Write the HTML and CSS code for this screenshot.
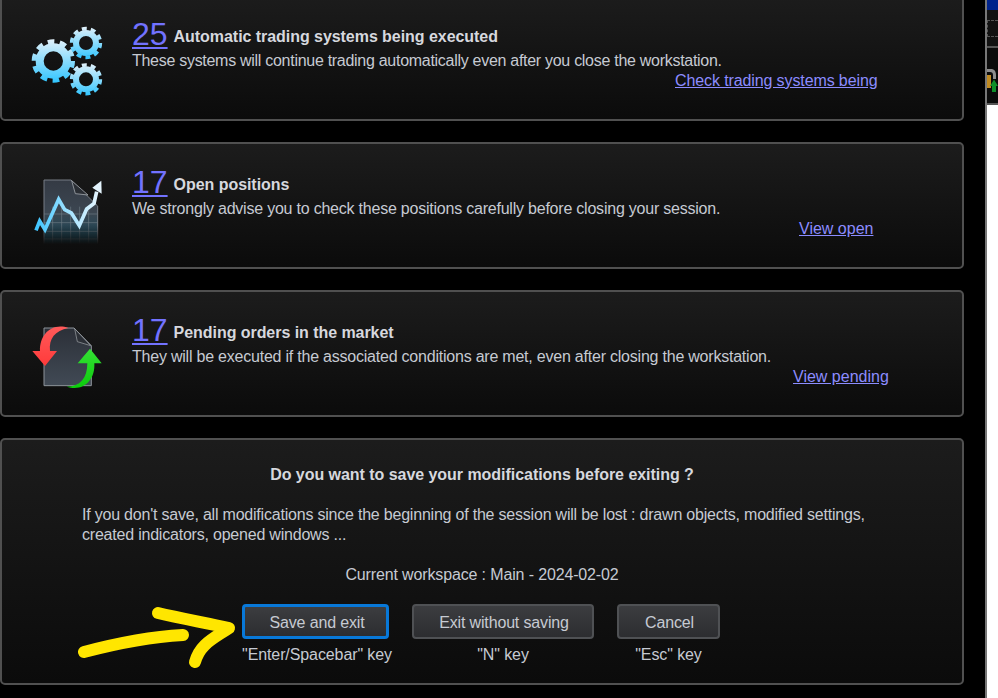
FILE: index.html
```html
<!DOCTYPE html>
<html lang="en">
<head>
<meta charset="utf-8">
<title>Exit workstation</title>
<link rel="stylesheet" href="styles.css">
</head>
<body>
<div class="screen">
  <main class="dialog">
    <section class="panel info">
      <svg class="icon" viewBox="60 72 300 240" aria-hidden="true">
        <defs>
          <linearGradient id="gearBig" gradientUnits="userSpaceOnUse" x1="0" y1="118" x2="0" y2="248">
            <stop offset="0" stop-color="#e2f1fa"/>
            <stop offset="1" stop-color="#30c5ff"/>
          </linearGradient>
          <linearGradient id="gearTop" gradientUnits="userSpaceOnUse" x1="0" y1="80" x2="0" y2="178">
            <stop offset="0" stop-color="#e2f1fa"/>
            <stop offset="1" stop-color="#30c5ff"/>
          </linearGradient>
          <linearGradient id="gearLow" gradientUnits="userSpaceOnUse" x1="0" y1="190" x2="0" y2="287">
            <stop offset="0" stop-color="#e2f1fa"/>
            <stop offset="1" stop-color="#30c5ff"/>
          </linearGradient>
        </defs>
        <g fill="none">
          <g stroke="url(#gearBig)">
            <circle cx="160" cy="183" r="41" stroke-width="24"/>
            <circle cx="160" cy="183" r="58" stroke-width="14" pathLength="100" stroke-dasharray="5.5 4.5"/>
          </g>
          <g stroke="url(#gearTop)">
            <circle cx="258" cy="129" r="30" stroke-width="18"/>
            <circle cx="258" cy="129" r="43" stroke-width="11" pathLength="100" stroke-dasharray="5.5 4.5"/>
          </g>
          <g stroke="url(#gearLow)">
            <circle cx="258" cy="238" r="30" stroke-width="18"/>
            <circle cx="258" cy="238" r="43" stroke-width="11" pathLength="100" stroke-dasharray="5.5 4.5"/>
          </g>
        </g>
      </svg>
      <div class="info-body">
        <div class="headline"><a class="count" href="#">25</a><strong class="title">Automatic trading systems being executed</strong></div>
        <p class="line line-tight">These systems will continue trading automatically even after you close the workstation.</p>
        <a class="action action-systems" href="#">Check trading systems being</a>
      </div>
    </section>

    <section class="panel info">
      <svg class="icon" viewBox="60 111 300 240" aria-hidden="true">
        <defs>
          <linearGradient id="fade" x1="0" y1="0" x2="0" y2="1">
            <stop offset="0" stop-color="#fff"/>
            <stop offset=".72" stop-color="#fff"/>
            <stop offset="1" stop-color="#000"/>
          </linearGradient>
          <mask id="fadeMask" maskUnits="userSpaceOnUse" x="60" y="120" width="300" height="220">
            <rect x="60" y="120" width="300" height="208" fill="url(#fade)"/>
          </mask>
          <linearGradient id="docChart" x1="0" y1="0" x2="0" y2="1">
            <stop offset="0" stop-color="#343a44"/>
            <stop offset=".5" stop-color="#3c4651"/>
            <stop offset="1" stop-color="#14485a"/>
          </linearGradient>
          <linearGradient id="chartLine" gradientUnits="userSpaceOnUse" x1="105" y1="0" x2="300" y2="0">
            <stop offset="0" stop-color="#3cc4ff"/>
            <stop offset=".55" stop-color="#a8e4ff"/>
            <stop offset="1" stop-color="#e8f6ff"/>
          </linearGradient>
        </defs>
        <g mask="url(#fadeMask)">
          <path d="M132 135H213L293 213V328H132Z" fill="url(#docChart)" stroke="#777d85" stroke-width="3"/>
          <path d="M158 215V328M185 215V328M212 215V328M239 215V328M266 215V328M132 237H293M132 263H293M132 289H293M132 312H293" stroke="#6c7a83" stroke-width="2" fill="none"/>
        </g>
        <path d="M215 137L226 176L264 180Z" fill="#2a2e34" stroke="#a0a5ab" stroke-width="2.5"/>
        <path d="M108 286L119 258L135 284L176 193L194 224L214 234L238 272L260 222L282 205L290 170" fill="none" stroke="url(#chartLine)" stroke-width="11"/>
        <path d="M304 137L305 176L277 158Z" fill="#e4f4fd"/>
      </svg>
      <div class="info-body">
        <div class="headline"><a class="count" href="#">17</a><strong class="title">Open positions</strong></div>
        <p class="line">We strongly advise you to check these positions carefully before closing your session.</p>
        <a class="action action-open" href="#">View open</a>
      </div>
    </section>

    <section class="panel info">
      <svg class="icon" viewBox="60 105 300 240" aria-hidden="true">
        <defs>
          <linearGradient id="docOrders" x1="0" y1="0" x2="0" y2="1">
            <stop offset="0" stop-color="#2c3038"/>
            <stop offset="1" stop-color="#414a55"/>
          </linearGradient>
          <linearGradient id="red" x1="0" y1="0" x2="0" y2="1">
            <stop offset="0" stop-color="#ff5a5a"/>
            <stop offset="1" stop-color="#ff3a3a"/>
          </linearGradient>
          <linearGradient id="green" x1="0" y1="0" x2="0" y2="1">
            <stop offset="0" stop-color="#35e035"/>
            <stop offset="1" stop-color="#0ccc0c"/>
          </linearGradient>
        </defs>
        <path d="M132 129H222L274 182V302H132Z" fill="url(#docOrders)" stroke="#8d939a" stroke-width="3"/>
        <path d="M224 131L232 170L272 182Z" fill="#2b2f36" stroke="#a4a9ae" stroke-width="2"/>
        <path d="M205 129C155 112 118 150 120 198H97L135 243L171 198H150C146 160 165 138 205 129Z" fill="url(#red)"/>
        <path d="M233 235L270 191L305 235H283C286 285 250 322 200 305C240 305 262 280 262 235Z" fill="url(#green)"/>
      </svg>
      <div class="info-body">
        <div class="headline"><a class="count" href="#">17</a><strong class="title">Pending orders in the market</strong></div>
        <p class="line">They will be executed if the associated conditions are met, even after closing the workstation.</p>
        <a class="action action-pending" href="#">View pending</a>
      </div>
    </section>

    <section class="panel confirm">
      <h1 class="question">Do you want to save your modifications before exiting ?</h1>
      <p class="warning">If you don't save, all modifications since the beginning of the session will be lost : drawn objects, modified settings, created indicators, opened windows ...</p>
      <p class="workspace">Current workspace : Main - 2024-02-02</p>
      <div class="choices">
        <div class="choice choice-save">
          <button class="btn btn-primary" type="button">Save and exit</button>
          <span class="hint">"Enter/Spacebar" key</span>
        </div>
        <div class="choice choice-discard">
          <button class="btn" type="button">Exit without saving</button>
          <span class="hint">"N" key</span>
        </div>
        <div class="choice choice-cancel">
          <button class="btn" type="button">Cancel</button>
          <span class="hint">"Esc" key</span>
        </div>
      </div>
    </section>
  </main>

  <aside class="backdrop" aria-hidden="true">
    <div class="bd-blue"></div>
    <div class="bd-toolbar"><span class="bd-dashed"></span></div>
    <div class="bd-status">
      <svg class="bd-lock" viewBox="0 0 11 26">
        <path d="M0 1H4C7 1 9 3 9 7V11H6V7C6 5 5 4 3 4H0Z" fill="#8d8d8d"/>
        <rect x="0" y="7" width="4" height="13" fill="#c08a20"/>
        <path d="M7 11.500L11 18H9V24H5V18H3Z" fill="#0f8f2a"/>
      </svg>
    </div>
    <div class="bd-white"></div>
  </aside>

  <svg class="scribble" viewBox="0 0 180 80" aria-hidden="true">
    <path d="M6 53C40 44 70 38 105 36" />
    <path d="M80 14C105 20 130 24 151 29C135 40 122 45 117 63" />
  </svg>
</div>
</body>
</html>
```

FILE: styles.css
```css
* { box-sizing: border-box; }

html, body {
  margin: 0;
  height: 100%;
  background: #000;
  overflow: hidden;
}

body {
  font-family: "Liberation Sans", Arial, sans-serif;
  font-size: 16px;
  line-height: 20px;
  color: #c6cad2;
}

.screen {
  position: relative;
  display: flex;
  width: 998px;
  height: 698px;
  overflow: hidden;
}

.dialog {
  display: flex;
  flex-direction: column;
  gap: 21px;
  width: 964px;
  margin-top: -6px;
  flex: none;
}

.panel {
  border: 2px solid #505050;
  border-radius: 5px;
  background: linear-gradient(#1c1c1c, #0b0b0b);
}

.info {
  display: flex;
  height: 127px;
  padding: 28px 0 0 18px;
}

.icon {
  display: block;
  width: 100px;
  height: 80px;
  flex: none;
}

.info-body {
  display: flex;
  flex-direction: column;
  align-items: flex-start;
  margin-left: 12px;
  margin-top: -9px;
}

.headline {
  display: flex;
  align-items: flex-start;
  gap: 6px;
  height: 36px;
}

.count {
  margin-top: 1px;
  font-size: 32px;
  line-height: 36px;
  color: #7272ff;
  text-decoration-thickness: 2px;
  text-underline-offset: 2px;
}

.title {
  margin-top: 12px;
  font-weight: 700;
  letter-spacing: -0.05px;
  color: #d6d8de;
}

.line {
  margin: 0;
  letter-spacing: -0.22px;
}

.line-tight { letter-spacing: -0.285px; }

.action { color: #8c8cff; }

.action-systems { margin-left: 543px; letter-spacing: -0.11px; }
.action-open { margin-left: 667px; }
.action-pending { margin-left: 661px; }

.confirm {
  height: 247px;
  padding: 25px 80px 0;
}

.question {
  margin: 0 0 20px;
  font-size: 16px;
  line-height: 20px;
  font-weight: 700;
  letter-spacing: -0.04px;
  text-align: center;
  color: #d6d8de;
}

.warning {
  margin: 0 0 20px;
  letter-spacing: -0.21px;
}

.workspace {
  margin: 0 0 19px;
  letter-spacing: -0.14px;
  text-align: center;
}

.choices {
  display: flex;
  justify-content: flex-start;
  margin-left: 160px;
}

.choice {
  display: flex;
  flex-direction: column;
  align-items: center;
  gap: 6px;
}

.choice-save { width: 150px; margin-right: 20px; align-items: flex-start; }
.choice-discard { width: 182px; margin-right: 23px; }
.choice-cancel { width: 103px; }

.btn {
  width: 100%;
  height: 35px;
  padding: 2px 0 0 2px;
  border: 2px solid #4f5154;
  border-radius: 4px;
  background: linear-gradient(#3c3d40, #2c2d30);
  color: #c6cad2;
  font: inherit;
  letter-spacing: -0.15px;
}

.btn-primary {
  width: 147px;
  padding-left: 3px;
  border: 3px solid #0878d8;
}

.hint {
  white-space: nowrap;
  text-align: center;
  align-self: center;
  letter-spacing: -0.1px;
}

.backdrop {
  display: flex;
  flex-direction: column;
  width: 13px;
  margin-left: 21px;
  border-left: 2px solid #777;
  background: #000;
  flex: none;
}

.bd-blue { height: 10px; background: #00238c; }

.bd-toolbar {
  height: 38px;
  padding-top: 10px;
  border-bottom: 2px solid #555;
  background: #111;
}

.bd-dashed {
  display: block;
  width: 11px;
  height: 17px;
  border: 1px dashed #555;
  border-right: 0;
}

.bd-status {
  height: 57px;
  padding-top: 20px;
  border-bottom: 2px solid #555;
  background: #0b0b0b;
}

.bd-lock {
  display: block;
  width: 11px;
  height: 26px;
}

.bd-white { flex: 1; background: #fff; }

.scribble {
  position: absolute;
  left: 78px;
  top: 599px;
  width: 180px;
  height: 80px;
  fill: none;
  stroke: #ffe600;
  stroke-width: 12;
  stroke-linecap: round;
  stroke-linejoin: round;
}
```
